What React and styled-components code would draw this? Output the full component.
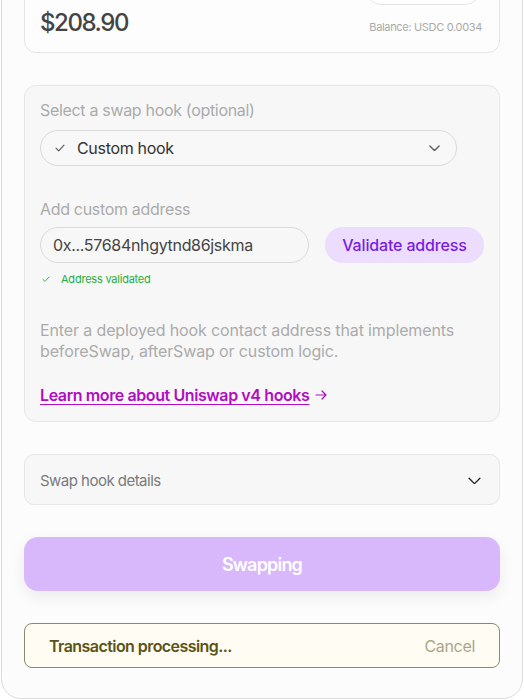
import React from "react";
import styled, { createGlobalStyle } from "styled-components";

const GlobalStyle = createGlobalStyle`
  html, body {
    margin: 0;
    padding: 0;
    background: #ffffff;
    overflow: hidden;
  }
  body {
    font-family: Inter, "Noto Sans", sans-serif;
    -webkit-font-smoothing: antialiased;
  }
  * {
    box-sizing: border-box;
  }
`;

const SwapPanel = styled.main`
  width: 522px;
  margin: -69px auto 0;
  padding: 24px 22px 30px;
  display: flex;
  flex-direction: column;
  gap: 32px;
  background: #fcfcfc;
  border: 1px solid #dcdcdc;
  border-radius: 20px;
`;

const PayCard = styled.section`
  display: flex;
  flex-direction: column;
  gap: 4px;
  padding: 12px 17px 15px 15px;
  background: #fdfdfd;
  border: 1px solid #e6e6e6;
  border-radius: 12px;
`;

const PayRow = styled.div`
  display: flex;
  justify-content: space-between;
  align-items: ${(p) => (p.baseline ? "baseline" : "center")};
`;

const TokenButton = styled.button`
  width: 118px;
  height: 36px;
  margin-left: auto;
  display: flex;
  align-items: center;
  justify-content: center;
  gap: 8px;
  border: 1px solid #e6e6e6;
  border-radius: 18px;
  background: #fff;
`;

const Fiat = styled.span`
  font-size: 24px;
  line-height: 28px;
  font-weight: 500;
  letter-spacing: -0.06em;
  color: #444;
`;

const Balance = styled.span`
  font-size: 11px;
  letter-spacing: -0.03em;
  color: #aaaaaa;
`;

const HookCard = styled.section`
  display: flex;
  flex-direction: column;
  padding: 12px 13px 14px 15px;
  background: #f7f7f7;
  border: 1px solid #e6e6e6;
  border-radius: 12px;
`;

const Label = styled.div`
  font-size: 16px;
  line-height: 24px;
  letter-spacing: -0.02em;
  color: #ababab;
  margin-top: ${(p) => p.top || 0}px;
`;

const Select = styled.div`
  width: 417px;
  height: 36px;
  margin-top: 8px;
  padding: 0 16px 0 14px;
  display: flex;
  align-items: center;
  gap: 12px;
  border: 1px solid #dadada;
  border-radius: 18px;
  background: #f8f8f8;
`;

const SelectText = styled.span`
  flex: 1;
  font-size: 16px;
  letter-spacing: -0.02em;
  color: #333;
`;

const InputRow = styled.div`
  display: flex;
  gap: 16px;
  margin-top: 6px;
`;

const AddressInput = styled.div`
  width: 269px;
  height: 36px;
  padding: 0 12px;
  display: flex;
  align-items: center;
  border: 1px solid #dadada;
  border-radius: 18px;
  font-size: 16px;
  letter-spacing: -0.02em;
  color: #444;
`;

const ValidateButton = styled.button`
  width: 159px;
  height: 36px;
  border: none;
  border-radius: 18px;
  background: #ecdcfd;
  font: 500 16px Inter, sans-serif;
  letter-spacing: -0.01em;
  color: #7a1de0;
`;

const Validated = styled.div`
  margin-top: 8px;
  padding-left: 2px;
  display: flex;
  align-items: center;
  gap: 11px;
  font-size: 11px;
  line-height: 16px;
  letter-spacing: -0.02em;
  color: #1fae3f;
`;

const Description = styled.p`
  margin: 33px 0 0;
  font-size: 16px;
  line-height: 21px;
  letter-spacing: -0.008em;
  color: #ababab;
`;

const LearnLink = styled.a`
  margin-top: 21px;
  display: flex;
  align-items: center;
  gap: 6px;
  font-size: 16px;
  line-height: 24px;
  font-weight: 600;
  letter-spacing: -0.025em;
  color: #b10cc2;
  text-decoration: none;

  span {
    text-decoration: underline;
    text-underline-offset: 3px;
  }
`;

const DetailsCard = styled.div`
  height: 51px;
  padding: 2px 18px 0 15px;
  display: flex;
  align-items: center;
  justify-content: space-between;
  background: #f7f7f7;
  border: 1px solid #e6e6e6;
  border-radius: 10px;
  font-size: 15px;
  letter-spacing: -0.035em;
  color: #7a7a7a;
`;

const SwapButton = styled.button`
  height: 54px;
  border: none;
  border-radius: 14px;
  background: #d8b8fb;
  box-shadow: 0 6px 16px rgba(0, 0, 0, 0.07);
  font: 600 18px Inter, sans-serif;
  letter-spacing: -0.045em;
  color: #ffffff;
`;

const StatusBar = styled.div`
  height: 45px;
  padding: 0 24px;
  display: flex;
  align-items: center;
  justify-content: space-between;
  background: #fffcf3;
  border: 1px solid #8d8868;
  border-radius: 8px;
`;

const StatusText = styled.span`
  font-size: 16px;
  font-weight: 600;
  letter-spacing: -0.035em;
  color: #5a5318;
`;

const CancelText = styled.span`
  font-size: 16px;
  letter-spacing: -0.02em;
  color: #aaa68c;
`;

function Check({ size = 10, color = "#555" }) {
  return (
    <svg width={size} height={size * 0.8} viewBox="0 0 10 8" fill="none">
      <path d="M1 4.2L3.7 6.8L9 1.2" stroke={color} strokeWidth="1.1" strokeLinecap="round" strokeLinejoin="round" />
    </svg>
  );
}

function Chevron({ width = 11, color = "#666", stroke = 1.6 }) {
  return (
    <svg width={width} height={width * 0.6} viewBox="0 0 12 7" fill="none">
      <path d="M1 1L6 6L11 1" stroke={color} strokeWidth={stroke} strokeLinecap="round" strokeLinejoin="round" />
    </svg>
  );
}

export default function App() {
  return (
    <>
      <GlobalStyle />
      <SwapPanel>
        <PayCard>
          <PayRow>
            <TokenButton aria-label="Select token">
              <svg width="20" height="20" viewBox="0 0 20 20">
                <circle cx="10" cy="10" r="10" fill="#2775ca" />
              </svg>
              <Chevron width={10} color="#666" />
            </TokenButton>
          </PayRow>
          <PayRow baseline>
            <Fiat>$208.90</Fiat>
            <Balance>Balance: USDC 0.0034</Balance>
          </PayRow>
        </PayCard>

        <HookCard>
          <Label>Select a swap hook (optional)</Label>
          <Select>
            <Check size={10} color="#555" />
            <SelectText>Custom hook</SelectText>
            <Chevron width={11} color="#666" />
          </Select>

          <Label top={31}>Add custom address</Label>
          <InputRow>
            <AddressInput>0x...57684nhgytnd86jskma</AddressInput>
            <ValidateButton>Validate address</ValidateButton>
          </InputRow>
          <Validated>
            <Check size={8} color="#1fae3f" />
            Address validated
          </Validated>

          <Description>
            Enter a deployed hook contact address that implements beforeSwap, afterSwap or custom logic.
          </Description>

          <LearnLink href="#">
            <span>Learn more about Uniswap v4 hooks</span>
            <svg width="12" height="10" viewBox="0 0 12 10" fill="none">
              <path d="M1 5H11M7 1L11 5L7 9" stroke="#b10cc2" strokeWidth="1.2" strokeLinecap="round" strokeLinejoin="round" />
            </svg>
          </LearnLink>
        </HookCard>

        <DetailsCard>
          Swap hook details
          <Chevron width={13} color="#222" stroke={1.2} />
        </DetailsCard>

        <SwapButton>Swapping</SwapButton>

        <StatusBar>
          <StatusText>Transaction processing...</StatusText>
          <CancelText>Cancel</CancelText>
        </StatusBar>
      </SwapPanel>
    </>
  );
}
